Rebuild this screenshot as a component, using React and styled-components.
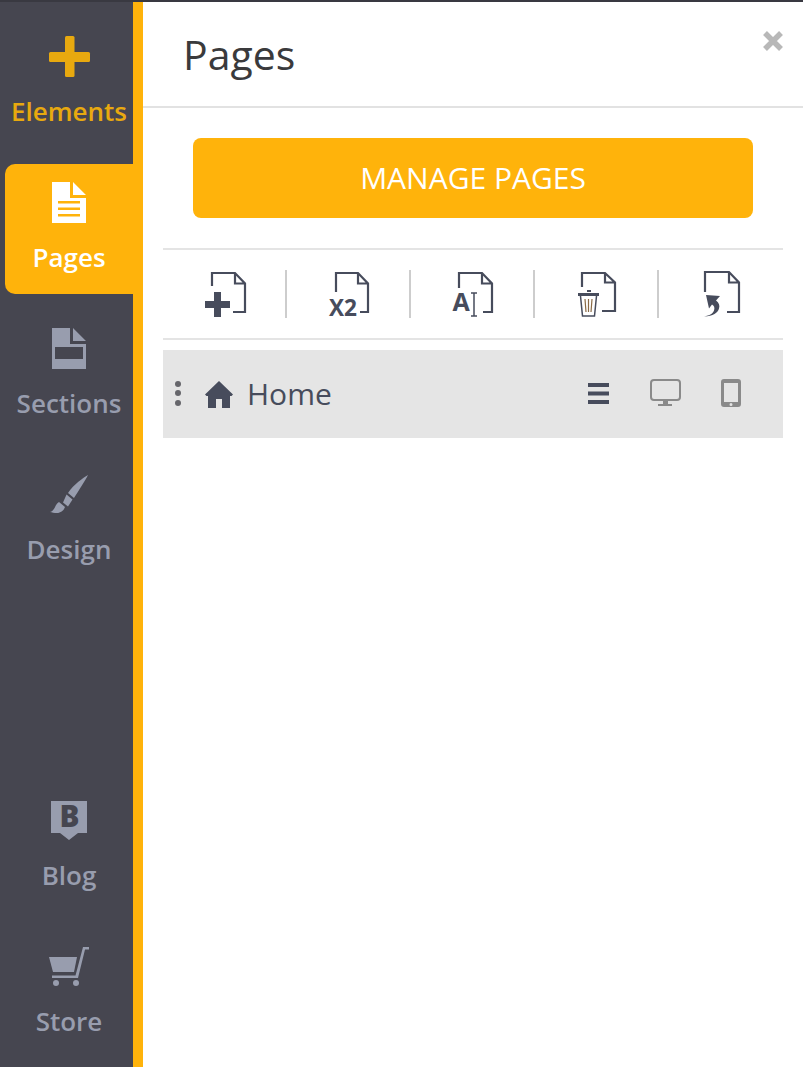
import styled, { createGlobalStyle } from "styled-components";

const ORANGE = "#ffb30b";
const INK = "#474c5c";
const SIDE_BG = "#464650";

const GlobalStyle = createGlobalStyle`
  html, body {
    margin: 0;
    padding: 0;
    background: #fff;
  }
  body {
    font-family: "Open Sans", "Liberation Sans", sans-serif;
  }
`;

const Page = styled.div`
  width: 803px;
  height: 1067px;
  display: flex;
  flex-direction: column;
  overflow: hidden;
  border-top: 2px solid #393941;
  box-sizing: border-box;
`;

const Body = styled.div`
  flex: 1;
  display: flex;
  min-height: 0;
`;

const Sidebar = styled.nav`
  width: 133px;
  flex-shrink: 0;
  background: ${SIDE_BG};
  border-right: 10px solid ${ORANGE};
  display: flex;
  flex-direction: column;
  padding-top: 16px;
  padding-bottom: 9px;
`;

const NavGroup = styled.div`
  display: flex;
  flex-direction: column;
  gap: 16px;
  margin-top: ${(p) => (p.$bottom ? "auto" : "0")};
`;

const NavItem = styled.a`
  height: 130px;
  box-sizing: border-box;
  margin-left: 5px;
  padding-top: 18px;
  background: ${(p) => (p.$active ? ORANGE : "transparent")};
  border-radius: 10px 0 0 10px;
  display: flex;
  flex-direction: column;
  align-items: center;
  color: ${(p) => p.$color};
  font-size: 26px;
  font-weight: 600;
  line-height: 34px;
`;

const NavIcon = styled.svg`
  display: block;
  width: 44px;
  height: 44px;
  overflow: visible;
  fill: currentColor;
`;

const NavLabel = styled.span`
  margin-top: 14px;
  white-space: nowrap;
`;

const Panel = styled.main`
  flex: 1;
  min-width: 0;
  display: flex;
  flex-direction: column;
`;

const PanelHeader = styled.header`
  height: 106px;
  box-sizing: border-box;
  border-bottom: 2px solid #e2e2e2;
  padding: 27px 0 0 40px;
  position: relative;
`;

const Title = styled.h1`
  margin: 0;
  font-size: 41px;
  font-weight: 400;
  line-height: 50px;
  color: #3a3a3c;
`;

const CloseButton = styled.svg`
  position: absolute;
  top: 29px;
  right: 20px;
  width: 20px;
  height: 20px;
  stroke: #b8b8b8;
  stroke-width: 5.5;
`;

const Content = styled.section`
  padding: 30px 20px 0;
  display: flex;
  flex-direction: column;
`;

const ManageButton = styled.button`
  align-self: center;
  width: 560px;
  height: 80px;
  padding: 0 0 2px;
  border: none;
  border-radius: 8px;
  background: ${ORANGE};
  color: #fff;
  font-family: inherit;
  font-size: 30px;
  font-weight: 400;
`;

const Toolbar = styled.div`
  margin-top: 30px;
  height: 92px;
  box-sizing: border-box;
  border-top: 2px solid #e4e4e4;
  border-bottom: 2px solid #e4e4e4;
  display: grid;
  grid-template-columns: repeat(5, 124px);
  align-items: center;
`;

const ToolCell = styled.div`
  height: 48px;
  display: flex;
  justify-content: center;
  box-shadow: ${(p) => (p.$last ? "none" : "inset -2px 0 0 #cdcdcd")};
`;

const ToolIcon = styled.svg`
  width: 48px;
  height: 48px;
  overflow: visible;
  margin-left: -1px;
`;

const PageRow = styled.div`
  margin-top: 10px;
  height: 88px;
  background: #e5e5e5;
  display: flex;
  align-items: center;
`;

const DragHandle = styled.div`
  width: 6px;
  margin-left: 12px;
  display: flex;
  flex-direction: column;
  gap: 3.5px;
  margin-top: -2px;
`;

const Dot = styled.span`
  width: 6px;
  height: 6px;
  border-radius: 50%;
  background: #66666b;
`;

const HomeIcon = styled.svg`
  width: 30px;
  height: 28px;
  margin-left: 23px;
  fill: ${INK};
`;

const PageName = styled.span`
  margin-left: 13px;
  font-size: 30px;
  line-height: 40px;
  color: ${INK};
`;

const RowActions = styled.div`
  margin-left: auto;
  margin-right: 42px;
  display: flex;
  align-items: center;
  gap: 40px;
`;

const RowIcon = styled.svg`
  display: block;
  width: ${(p) => p.$w}px;
  height: 28px;
  margin-top: -2px;
  overflow: visible;
`;

const navItems = [
  {
    label: "Elements",
    color: "#e8a90f",
    icon: (
      <>
        <rect x="18" y="0" width="9.500" height="41" rx="1.500" />
        <rect x="2" y="16" width="41" height="10" rx="1.500" />
      </>
    ),
  },
  {
    label: "Pages",
    color: "#fff",
    active: true,
    icon: (
      <>
        <path d="M5 0h18v16h16v25H5zM26 0l13 13H26z" />
        <path d="M11 19h22v2.500H11zM11 25.500h22V28H11zM11 32h22v2.500H11z" fill={ORANGE} />
      </>
    ),
  },
  {
    label: "Sections",
    color: "#989dae",
    icon: <path fillRule="evenodd" d="M5 0h18v16h16v25H5zM8 19v12h28V19zM26 0l13 13H26z" />,
  },
  {
    label: "Design",
    color: "#989dae",
    icon: (
      <>
        <path d="M41 1C38 7 32 16 27 24l-6-5C27 10 36 4 41 1z" />
        <path d="M19.500 20.500l6 5-4.500 7-5-4z" />
        <path d="M12 28l6 5c-1 3-4 6-8 6-3 0-5-.500-7-1 5-1 5-8 9-10z" />
      </>
    ),
  },
];

const bottomItems = [
  {
    label: "Blog",
    color: "#989dae",
    icon: (
      <>
        <path d="M4 1h36v32h-9l-9 7-9-7H4z" />
        <text x="12.500" y="27" fontFamily="Open Sans" fontWeight="800" fontSize="30" textLength="20" lengthAdjust="spacingAndGlyphs" fill={SIDE_BG}>B</text>
      </>
    ),
  },
  {
    label: "Store",
    color: "#989dae",
    icon: (
      <>
        <path d="M2 11h28l-3 15H6z" />
        <path d="M36 1h6v2.500h-4L31 32H5v-2.500h23.500z" />
        <circle cx="9" cy="37" r="3" />
        <circle cx="29" cy="37" r="3" />
      </>
    ),
  },
];

// the doc outlines in the toolbar differ only by a few px
const DocOutline = ({ d }) => (
  <path d={d} fill="none" stroke={INK} strokeWidth="2.200" />
);

const NavEntry = ({ item }) => (
  <NavItem $active={item.active} $color={item.color}>
    <NavIcon viewBox="0 0 44 44">{item.icon}</NavIcon>
    <NavLabel>{item.label}</NavLabel>
  </NavItem>
);

const App = () => (
  <>
    <GlobalStyle />
    <Page>
      <Body>
        <Sidebar>
          <NavGroup>
            {navItems.map((item) => (
              <NavEntry key={item.label} item={item} />
            ))}
          </NavGroup>
          <NavGroup $bottom>
            {bottomItems.map((item) => (
              <NavEntry key={item.label} item={item} />
            ))}
          </NavGroup>
        </Sidebar>
        <Panel>
          <PanelHeader>
            <Title>Pages</Title>
            <CloseButton viewBox="0 0 20 20">
              <path d="M2 2l16 16M18 2L2 18" />
            </CloseButton>
          </PanelHeader>
          <Content>
            <ManageButton>MANAGE PAGES</ManageButton>
            <Toolbar>
              <ToolCell>
                <ToolIcon viewBox="0 0 48 48">
                  <DocOutline d="M11 16V3h23l10 10.500V42H32M34 3v10.500h10" />
                  <path d="M13 22h7v9h9v7h-9v9h-7v-9H4v-7h9z" fill={INK} />
                </ToolIcon>
              </ToolCell>
              <ToolCell>
                <ToolIcon viewBox="0 0 48 48">
                  <DocOutline d="M11 22V3h22l10 10.500V42h-8M33 3v10.500h10" />
                  <text x="4" y="46" fontFamily="Open Sans" fontWeight="700" fontSize="23" textLength="28" lengthAdjust="spacingAndGlyphs" fill={INK}>X2</text>
                </ToolIcon>
              </ToolCell>
              <ToolCell>
                <ToolIcon viewBox="0 0 48 48">
                  <DocOutline d="M10 18V3h23l10 10.500V42h-9M33 3v10.500h10" />
                  <text x="3.500" y="41" fontFamily="Open Sans" fontWeight="700" fontSize="25" fill={INK}>A</text>
                  <path d="M22 23h6M25 23v23M22 46h6" fill="none" stroke={INK} strokeWidth="1.500" />
                </ToolIcon>
              </ToolCell>
              <ToolCell>
                <ToolIcon viewBox="0 0 48 48">
                  <DocOutline d="M9 17V3h23l10 9.500V41H29M32 3v9.500h10" />
                  <path d="M5 23h21v3H5zM14 20h4v2h-4z" fill={INK} />
                  <path d="M7.500 26l2 20h12l2-20" fill="none" stroke={INK} strokeWidth="1.500" />
                  <path d="M12 29l1 13M15.500 29v13M19 29l-1 13" fill="none" stroke="#8a6a45" strokeWidth="1.200" />
                </ToolIcon>
              </ToolCell>
              <ToolCell $last>
                <ToolIcon viewBox="0 0 48 48">
                  <DocOutline d="M8 22V2h24l10 10.500V42H30M32 2v10.500h10" />
                  <path d="M9 25l14 1-4 4.500c3 2 4 5 3 8-1 4-6 8-15 8 6-1 9-3 10-6 1-3 0-5-2-6l-3 4z" fill={INK} />
                </ToolIcon>
              </ToolCell>
            </Toolbar>
            <PageRow>
              <DragHandle>
                <Dot />
                <Dot />
                <Dot />
              </DragHandle>
              <HomeIcon viewBox="0 0 30 28">
                <path d="M15 1l14 13.500-1.500 1.500H26v12h-8v-9h-6v9H4V16H2.500L1 14.500z" />
              </HomeIcon>
              <PageName>Home</PageName>
              <RowActions>
                <RowIcon $w={21} viewBox="1 0 21 28">
                  <path d="M0 4h21v4H0zM0 12.500h21v4H0zM0 21h21v4H0z" fill={INK} />
                </RowIcon>
                <RowIcon $w={31} viewBox="0 0 31 28">
                  <rect x="1" y="1" width="29" height="20" rx="3" fill="none" stroke="#8a8a8a" strokeWidth="2" />
                  <path d="M13 22h5v3h4v2H8v-2h5z" fill="#8a8a8a" />
                </RowIcon>
                <RowIcon $w={20} viewBox="0 0 20 28">
                  <path
                    fillRule="evenodd"
                    d="M3 0h14a3 3 0 0 1 3 3v22a3 3 0 0 1-3 3H3a3 3 0 0 1-3-3V3a3 3 0 0 1 3-3zM3 4v19h14V4zM10 24a1.500 1.500 0 1 0 0 3 1.500 1.500 0 0 0 0-3z"
                    fill="#8a8a8a"
                  />
                </RowIcon>
              </RowActions>
            </PageRow>
          </Content>
        </Panel>
      </Body>
    </Page>
  </>
);

export default App;
